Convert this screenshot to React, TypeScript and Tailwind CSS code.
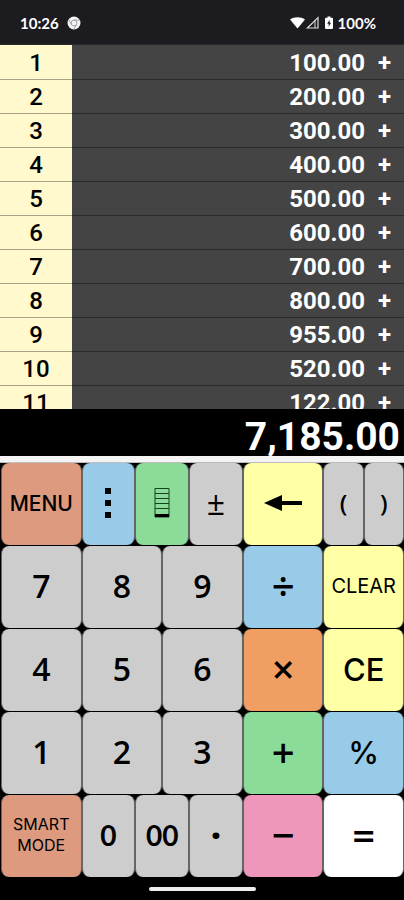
import React from 'react';

interface Entry {
  line: number;
  amount: number;
  op: string;
}

interface KeyProps {
  label: string;
  className: string;
  children?: React.ReactNode;
}

const entries: Entry[] = [
  { line: 1, amount: 100, op: '+' },
  { line: 2, amount: 200, op: '+' },
  { line: 3, amount: 300, op: '+' },
  { line: 4, amount: 400, op: '+' },
  { line: 5, amount: 500, op: '+' },
  { line: 6, amount: 600, op: '+' },
  { line: 7, amount: 700, op: '+' },
  { line: 8, amount: 800, op: '+' },
  { line: 9, amount: 955, op: '+' },
  { line: 10, amount: 520, op: '+' },
  { line: 11, amount: 122, op: '+' },
];

const StatusBar: React.FC = () => (
  <header className="flex h-11 shrink-0 items-center justify-between bg-[#1c1b20] pt-0.5 pr-7 pl-5 font-['Lato',sans-serif] text-[15px] font-bold text-white">
    <div className="flex items-center gap-2">
      <span>10:26</span>
      <svg width="14" height="14" viewBox="0 0 14 14" aria-hidden="true">
        <circle cx="7" cy="7" r="6.5" fill="#f4f4f4" />
        <circle cx="7" cy="7" r="2.9" fill="none" stroke="#99989d" strokeWidth="0.9" />
        <path d="M7 4.1h5.6M4.5 8.5 1.7 3.7M9.5 8.5 6.8 13.3" stroke="#99989d" strokeWidth="0.9" />
      </svg>
    </div>
    <div className="flex items-center">
      <svg width="44" height="14" viewBox="0 0 44 14" aria-hidden="true">
        <path d="M0 3.4C4 .4 11 .4 15 3.4L7.5 12.6Z" fill="#fff" />
        <path d="M17.4 12 28 1.6V12Z" fill="none" stroke="#ddd" strokeWidth="1.2" />
        <path d="M25 4.5V12" stroke="#ddd" strokeWidth="1" />
        <path d="M36 1.8h1.5V.6h3v1.2H42a1 1 0 0 1 1 1V12a1 1 0 0 1-1 1h-6a1 1 0 0 1-1-1V2.8a1 1 0 0 1 1-1Z" fill="#fff" />
        <path d="m39.6 3.8-2.4 4h1.5v3l2.3-4h-1.4Z" fill="#1c1b20" />
      </svg>
      <span className="ml-1">100%</span>
    </div>
  </header>
);

const Tape: React.FC = () => (
  <div className="min-h-0 flex-1 overflow-hidden border-t border-[#2b2b2b] bg-[#444444] font-['Roboto',sans-serif] text-2xl leading-7">
    <table className="w-full border-collapse">
      <tbody>
        {entries.map(entry => (
          <tr key={entry.line} className="h-[34px]">
            <th
              scope="row"
              className="w-[72px] border-b border-[#a5a285] bg-[#fff9cd] p-0 pt-0.5 text-center font-medium text-black"
            >
              {entry.line}
            </th>
            <td className="border-b border-[#2b2b2b] p-0 pt-0.5 text-right font-bold text-white">
              {entry.amount.toFixed(2)}
            </td>
            <td className="w-[39px] border-b border-[#2b2b2b] p-0 pt-0.5 text-center font-bold text-white">
              {entry.op}
            </td>
          </tr>
        ))}
      </tbody>
    </table>
  </div>
);

const Key: React.FC<KeyProps> = ({ label, className, children }) => (
  <button
    type="button"
    aria-label={label}
    className={`flex items-center justify-center rounded-lg border-x border-[#666666] pb-0.5 text-center text-black ${className}`}
  >
    {children ?? label}
  </button>
);

const num = "col-span-6 bg-[#cdcdcd] font-['Open_Sans',sans-serif] text-[32px] font-semibold";
const zero = "col-span-4 bg-[#cdcdcd] font-['Lato',sans-serif] text-[28px] font-bold";
const op = "col-span-6 font-['Open_Sans',sans-serif] text-[40px] font-semibold";

const Keypad: React.FC = () => (
  <div className="grid shrink-0 auto-rows-[82px] grid-cols-[repeat(30,minmax(0,1fr))] gap-y-px bg-black pl-px font-['Inter',sans-serif] leading-none">
    <Key label="MENU" className="col-span-6 bg-[#dd9a7f] text-[21px] font-medium" />
    <Key label="More" className="col-span-4 bg-[#98cbe8]">
      <svg width="8" height="30" viewBox="0 0 8 30">
        <path d="M1 0h6v6H1zM1 12h6v6H1zM1 24h6v6H1z" />
      </svg>
    </Key>
    <Key label="Tape" className="col-span-4 bg-[#8bdc98]">
      <svg width="16" height="30" viewBox="0 0 16 30">
        <path d="M1 .5h14V29H1zM1 5.5h14M1 10.5h14M1 15.5h14M1 20.5h14" fill="none" stroke="#16421d" />
        <path d="M1 26h14v3H1z" />
      </svg>
    </Key>
    <Key label="±" className="col-span-4 bg-[#cdcdcd] font-['Open_Sans',sans-serif] text-[32px]" />
    <Key label="Backspace" className="col-span-6 bg-[#ffffa5]">
      <svg width="38" height="18" viewBox="0 0 38 18">
        <path d="M0 9 18 1v6h20v4H18V17Z" />
      </svg>
    </Key>
    <Key label="(" className="col-span-3 bg-[#cdcdcd] font-['Open_Sans',sans-serif] text-2xl font-semibold" />
    <Key label=")" className="col-span-3 bg-[#cdcdcd] font-['Open_Sans',sans-serif] text-2xl font-semibold" />

    <Key label="7" className={num} />
    <Key label="8" className={num} />
    <Key label="9" className={num} />
    <Key label="÷" className={`${op} bg-[#98cbe8]`} />
    <Key label="CLEAR" className="col-span-6 bg-[#ffffa5] text-xl leading-none" />

    <Key label="4" className={num} />
    <Key label="5" className={num} />
    <Key label="6" className={num} />
    <Key label="×" className={`${op} bg-[#f09e62]`} />
    <Key label="CE" className="col-span-6 bg-[#ffffa5] text-[31px] font-medium" />

    <Key label="1" className={num} />
    <Key label="2" className={num} />
    <Key label="3" className={num} />
    <Key label="+" className={`${op} bg-[#8bdc98]`} />
    <Key label="%" className="col-span-6 bg-[#98cbe8] text-[31px] font-medium" />

    <Key label="SMART MODE" className="col-span-6 bg-[#dd9a7f] px-2 text-base leading-[21px]" />
    <Key label="0" className={zero} />
    <Key label="00" className={zero} />
    <Key label="·" className="col-span-4 bg-[#cdcdcd] font-['Open_Sans',sans-serif] text-[40px] font-bold" />
    <Key label="−" className={`${op} bg-[#ef97ba]`} />
    <Key label="=" className={`${op} bg-white`} />
  </div>
);

export default function App() {
  return (
    <main className="flex h-screen flex-col bg-black">
      <StatusBar />
      <Tape />
      <output className="block h-[47px] shrink-0 bg-black pt-1 pr-1 text-right font-['Roboto',sans-serif] text-[39px] leading-[48px] font-bold text-white">
        7,185.00
      </output>
      <div className="h-[7px] shrink-0 border-b border-[#bbbbbb] bg-[#f4f4f4]" />
      <Keypad />
      <footer className="flex h-[23px] shrink-0 items-center justify-center">
        <div className="h-1 w-[107px] rounded-sm bg-[#eeeeee]" />
      </footer>
    </main>
  );
}
